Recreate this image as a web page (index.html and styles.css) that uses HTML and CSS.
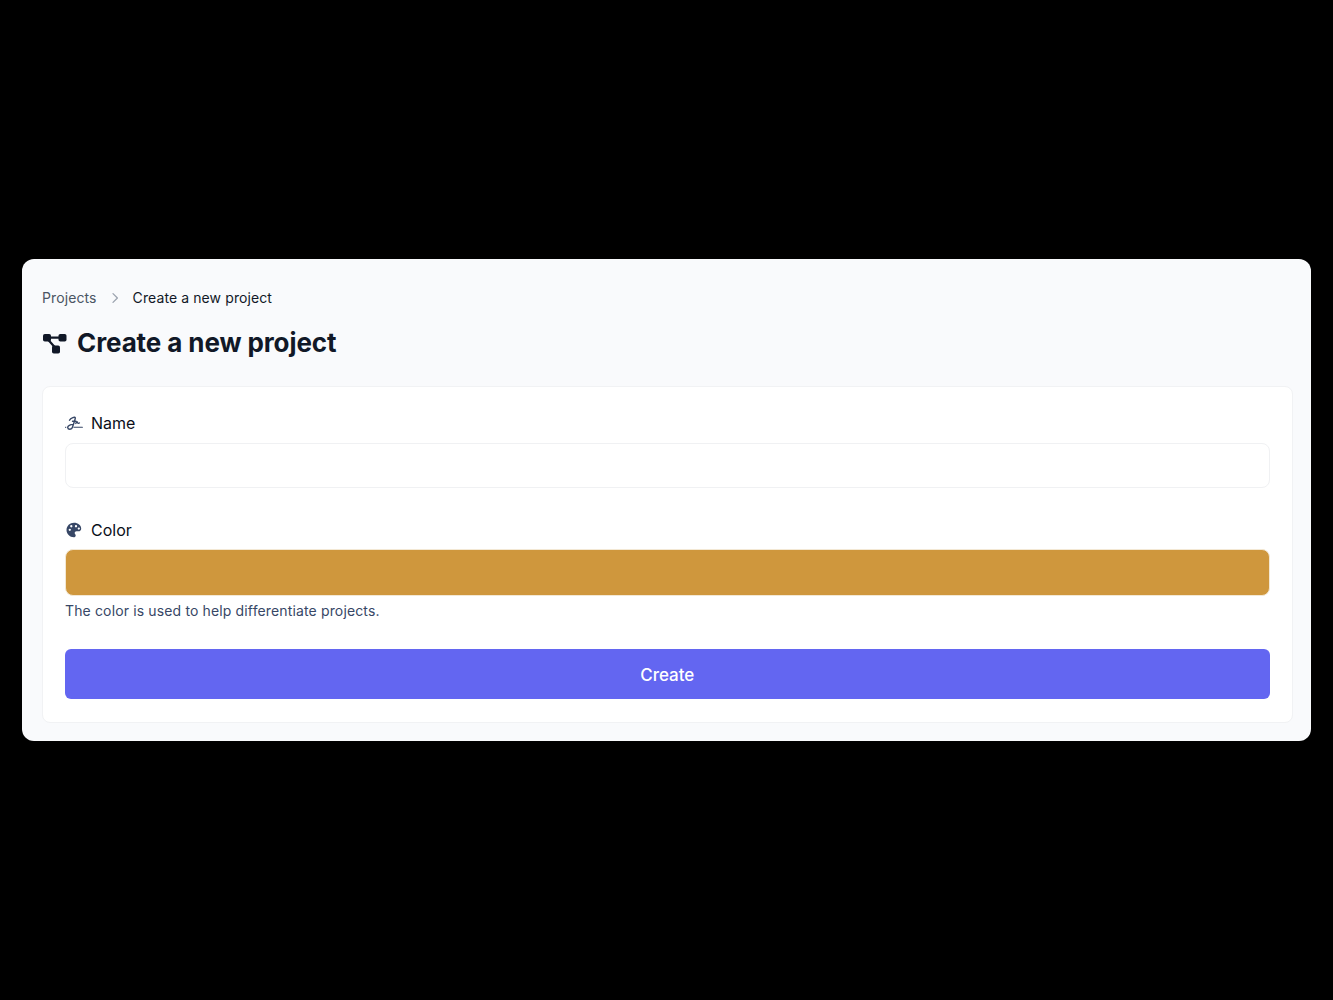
FILE: index.html
```html
<!DOCTYPE html>
<html lang="en">
<head>
    <meta charset="UTF-8">
    <meta name="viewport" content="width=device-width, initial-scale=1.0">
    <title>Create a new project</title>
    <link rel="stylesheet" href="styles.css">
</head>
<body>
    <main class="window">
        <nav class="breadcrumb">
            <a class="crumb-link" href="#">Projects</a>
            <svg class="crumb-sep" viewBox="0 0 20 20" fill="none" stroke="currentColor" stroke-width="1.6" stroke-linecap="round" stroke-linejoin="round">
                <path d="M7.5 4.5 13 10l-5.5 5.5"/>
            </svg>
            <span class="crumb-current">Create a new project</span>
        </nav>
        <h1 class="page-title">
            <svg class="title-icon" viewBox="0 0 24 21" fill="currentColor" stroke="currentColor">
                <rect x="0.5" y="1" width="8" height="7.5" rx="1.8" stroke="none"/>
                <rect x="16" y="1" width="8" height="7.5" rx="1.8" stroke="none"/>
                <rect x="9.5" y="12.5" width="8" height="8" rx="1.8" stroke="none"/>
                <path d="M5 4.700h14M5 6l8 9" stroke-width="2.2" fill="none"/>
            </svg>
            Create a new project
        </h1>
        <form class="panel">
            <div class="field">
                <label class="field-label" for="name">
                    <svg class="label-icon" viewBox="0 0 18 16" fill="none" stroke="currentColor" stroke-width="1.4" stroke-linecap="round" stroke-linejoin="round">
                        <path d="M4.500 5.200C5.500 3 10.500 1 10.300 3.200 10 5.500 8.300 9.500 7.500 12.300 6.800 14.800 3 14.800 2.700 12.600 2.500 10.800 5.500 9.600 8 9.400"/>
                        <path d="M7.500 6.200h3.500M10.800 8.400c.7-1.500 1.400-2 1.700-1 .3 1 1 1.200 1.900.6"/>
                        <path d="M9 12.300h8.400" stroke-width="1.1"/>
                        <path d="M.4 12.300h1" stroke-width="1" stroke-dasharray="0.500 1"/>
                    </svg>
                    Name
                </label>
                <input class="text-input" type="text" id="name">
            </div>
            <div class="field field-color">
                <label class="field-label label-tight" for="color">
                    <svg class="label-icon" viewBox="0 0 16 16">
                        <path fill="currentColor" fill-rule="evenodd" d="M8 .8C3.800.8.500 4 .500 8.100c0 4 3.300 7.200 7.300 7.200 1.100 0 1.900-.8 1.900-1.800 0-.5-.2-.9-.5-1.300-.3-.3-.5-.7-.5-1.200 0-1 .8-1.700 1.800-1.700h2.100c1.500 0 2.600-1.100 2.600-2.600C15.200 3.300 12 .8 8 .8ZM3.800 9a1.150 1.150 0 1 1 0-2.300 1.150 1.150 0 0 1 0 2.300Zm1.500-3.600a1.150 1.150 0 1 1 0-2.300 1.150 1.150 0 0 1 0 2.300Zm4.700 0a1.150 1.150 0 1 1 0-2.300 1.150 1.150 0 0 1 0 2.300Zm2.800 2.300a1.150 1.150 0 1 1 0-2.300 1.150 1.150 0 0 1 0 2.300Z"/>
                    </svg>
                    Color
                </label>
                <div class="color-swatch" id="color"></div>
                <p class="field-hint">The color is used to help differentiate projects.</p>
            </div>
            <button class="submit-btn" type="submit">Create</button>
        </form>
    </main>
</body>
</html>
```

FILE: styles.css
```css
* {
    box-sizing: border-box;
}

body {
    font-family: Inter, "Liberation Sans", sans-serif;
    margin: 0;
    padding: 0 22px 0 22px;
    background-color: #000;
    display: flex;
    flex-direction: column;
    justify-content: center;
    min-height: 100vh;
}

.window {
    background-color: #f9fafc;
    border-radius: 12px;
    padding: 29px 18px 19px 20px;
    height: 482px;
}

.breadcrumb {
    display: flex;
    align-items: center;
    font-size: 14px;
    line-height: 20px;
    letter-spacing: 0.1px;
}

.crumb-link {
    color: #4b5563;
    text-decoration: none;
}

.crumb-sep {
    width: 16px;
    height: 16px;
    margin: 0 10px 0 10px;
    color: #9ca3af;
}

.crumb-current {
    color: #111827;
}

.page-title {
    display: flex;
    align-items: center;
    gap: 10px;
    margin: 17px 0 0 0;
    font-size: 26px;
    line-height: 36px;
    font-weight: 700;
    letter-spacing: -0.1px;
    color: #111827;
}

.title-icon {
    width: 25px;
    height: 21px;
}

.panel {
    margin-top: 25px;
    background-color: #fff;
    border: 1px solid #f1f2f4;
    border-radius: 8px;
    padding: 26px 22.5px 22px 22px;
    height: 337px;
}

.field {
    margin-bottom: 32px;
}

.field-color {
    margin-bottom: 28px;
}

.field-label {
    display: flex;
    align-items: center;
    gap: 8px;
    font-size: 16px;
    line-height: 20px;
    color: #0b0f19;
    margin-bottom: 10px;
}

.label-tight {
    margin-bottom: 9px;
}

.label-icon {
    width: 18px;
    height: 16px;
    color: #374766;
}

.text-input {
    display: block;
    width: 100%;
    height: 45px;
    border: 1px solid #f0f1f3;
    border-radius: 8px;
    background-color: #fff;
}

.color-swatch {
    height: 47px;
    background-color: #cf973d;
    border: 1px solid #f3e8d4;
    border-radius: 8px;
}

.field-hint {
    margin: 5px 0 0 0;
    font-size: 14px;
    line-height: 20px;
    letter-spacing: 0.14px;
    color: #374766;
}

.submit-btn {
    display: block;
    width: 100%;
    height: 50px;
    padding: 2px 0 0 0;
    border: none;
    border-radius: 6px;
    background-color: #6366f1;
    color: #fff;
    font-family: inherit;
    font-size: 17px;
    font-weight: 500;
    cursor: pointer;
}
```
